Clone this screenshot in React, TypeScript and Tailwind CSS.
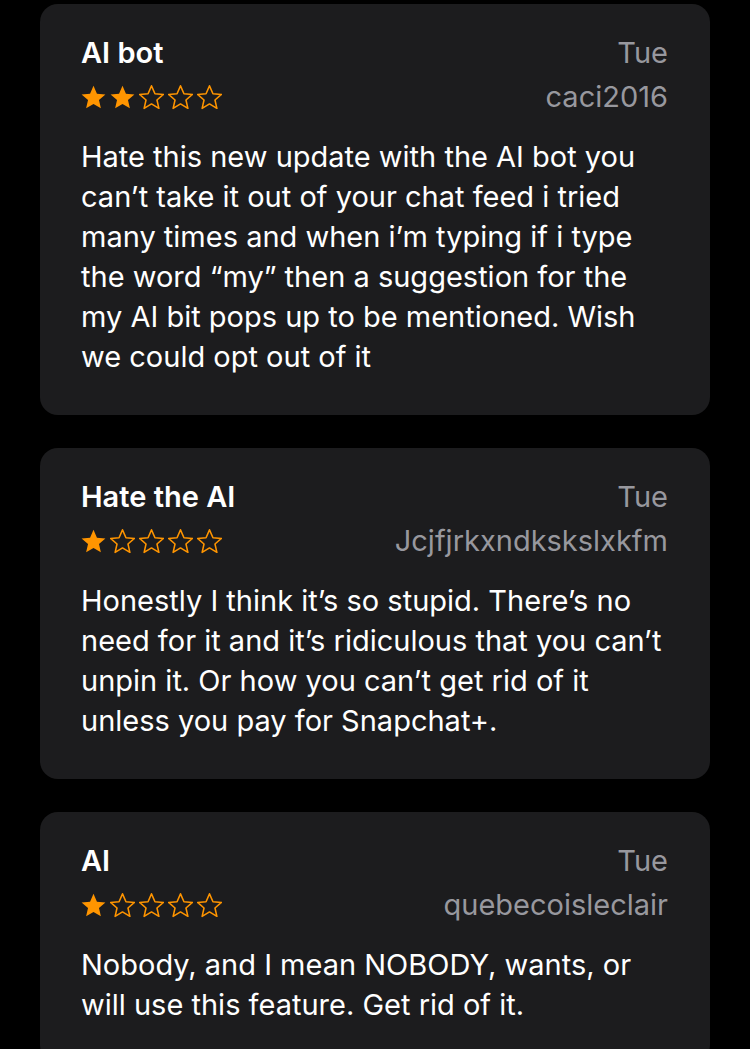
const reviews = [
  {
    title: "AI bot",
    date: "Tue",
    user: "caci2016",
    rating: 2,
    body: "Hate this new update with the AI bot you can\u2019t take it out of your chat feed i tried many times and when i\u2019m typing if i type the word \u201cmy\u201d then a suggestion for the my AI bit pops up to be mentioned. Wish we could opt out of it",
  },
  {
    title: "Hate the AI",
    date: "Tue",
    user: "Jcjfjrkxndkskslxkfm",
    rating: 1,
    body: "Honestly I think it\u2019s so stupid. There\u2019s no need for it and it\u2019s ridiculous that you can\u2019t unpin it. Or how you can\u2019t get rid of it unless you pay for Snapchat+.",
  },
  {
    title: "AI",
    date: "Tue",
    user: "quebecoisleclair",
    rating: 1,
    body: "Nobody, and I mean NOBODY, wants, or will use this feature. Get rid of it.",
  },
];

function Star({ filled }: { filled: boolean }) {
  return (
    <svg width="25" height="25" viewBox="1.5 1.5 21 21">
      <path
        d="M12 2.2l2.9 6.6 7.1.6-5.4 4.7 1.6 7-6.2-3.7-6.2 3.7 1.6-7L2 9.4l7.1-.6z"
        fill={filled ? "#ff9500" : "none"}
        stroke="#ff9500"
        strokeWidth={filled ? 0 : 1.3}
        strokeLinejoin="round"
      />
    </svg>
  );
}

function ReviewCard({
  title,
  date,
  user,
  rating,
  body,
}: (typeof reviews)[number]) {
  return (
    <div className="bg-[#1c1c1e] rounded-[18px] pl-[41px] pr-[42px] pt-[27px] pb-[38px]">
      <div className="flex justify-between">
        <div className="flex flex-col">
          <h3 className="h-[44px] leading-[44px] text-[29px] font-semibold text-white">
            {title}
          </h3>
          <div className="h-[44px] flex items-center gap-[4px]">
            {[0, 1, 2, 3, 4].map((i) => (
              <Star key={i} filled={i < rating} />
            ))}
          </div>
        </div>
        <div className="flex flex-col items-end text-[29px] text-[#98989e]">
          <span className="h-[44px] leading-[44px]">{date}</span>
          <span className="h-[44px] leading-[44px]">{user}</span>
        </div>
      </div>
      <p className="mt-[18px] text-[29px] leading-[40px] text-white">{body}</p>
    </div>
  );
}

export default function App() {
  return (
    <div
      className="min-h-screen bg-black px-[40px] pt-[4px] flex flex-col gap-[33px]"
      style={{ fontFamily: "Inter, 'Noto Sans', sans-serif" }}
    >
      {reviews.map((r) => (
        <ReviewCard key={r.user} {...r} />
      ))}
    </div>
  );
}
